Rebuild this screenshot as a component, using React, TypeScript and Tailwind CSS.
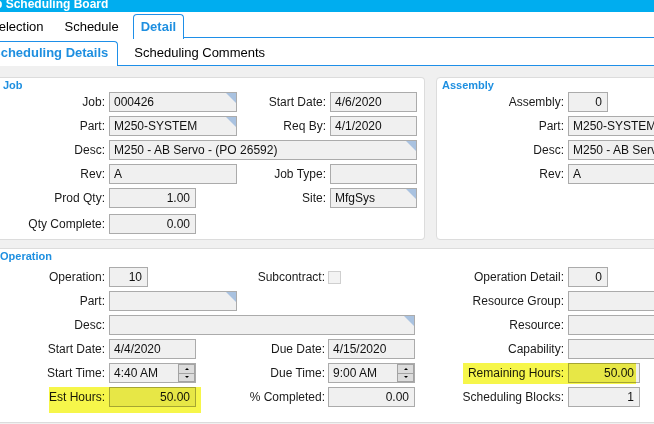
import React from "react";

// Job Scheduling Board - Detail / Scheduling Details tab

type FieldProps = {
  label?: string;
  lw: string;
  iw: string;
  value?: string;
  right?: boolean;
  tri?: boolean;
  spin?: boolean;
  pad?: string;
};

function Spinner() {
  return (
    <div className="absolute right-0 top-0 bottom-0 flex w-[17px] flex-col gap-[1px] bg-[#a3a3a3] p-[1px]">
      <div className="flex flex-1 items-center justify-center bg-[#dcdcdc]">
        <span className="h-0 w-0 border-x-[2px] border-b-[2px] border-x-transparent border-b-black" />
      </div>
      <div className="flex flex-1 items-center justify-center bg-[#dcdcdc]">
        <span className="h-0 w-0 border-x-[2px] border-t-[2px] border-x-transparent border-t-black" />
      </div>
    </div>
  );
}

function Field({ label, lw, iw, value, right, tri, spin, pad = "pr-[4px]" }: FieldProps) {
  return (
    <>
      <span className={`${lw} ${pad} shrink-0 whitespace-nowrap text-right`}>{label}</span>
      <div
        className={`${iw} relative flex h-[20px] shrink-0 items-center overflow-hidden whitespace-nowrap border border-[#ababab] bg-[#f0f0f0] text-[12px] text-[#111] ${
          right ? "justify-end pr-[5px]" : "pl-[4px]"
        }`}
      >
        {value}
        {tri && (
          <span className="absolute right-0 top-0 h-0 w-0 border-l-[10px] border-t-[10px] border-l-transparent border-t-[#a9c2e0]" />
        )}
        {spin && <Spinner />}
      </div>
    </>
  );
}

function Row({ children, className = "" }: { children: React.ReactNode; className?: string }) {
  return <div className={`flex h-[20px] items-center ${className}`}>{children}</div>;
}

function TopTab({ children, active }: { children: React.ReactNode; active?: boolean }) {
  return (
    <div
      className={
        active
          ? "flex h-[25px] items-center rounded-t-[4px] border border-b-0 border-[#1e8fe8] bg-white px-[7px] font-bold text-[#1e8fe0]"
          : "flex h-[25px] items-center px-[7px] text-black"
      }
    >
      {children}
    </div>
  );
}

export default function App() {
  return (
    <div className="h-[424px] w-[654px] overflow-hidden bg-[#f0f0f0] font-['Liberation_Sans',Arial,sans-serif] text-[12px] text-[#1a1a1a]">
      {/* title bar */}
      <div className="h-[12px] overflow-hidden bg-[#00adef]">
        <div className="-ml-[19px] -translate-y-[2px] whitespace-nowrap text-[12px] font-bold leading-[12px] text-white">
          Job Scheduling Board
        </div>
      </div>

      {/* main tabs */}
      <div className="flex h-[27px] items-end bg-white text-[13px]">
        <div className="-ml-[17px] flex items-end gap-[7px]">
          <TopTab>Selection</TopTab>
          <TopTab>Schedule</TopTab>
          <TopTab active>Detail</TopTab>
        </div>
        <div className="h-[2px] flex-1 border-t border-[#1e8fe8]" />
      </div>

      {/* sub tabs */}
      <div className="flex h-[27px] items-end bg-white text-[13px]">
        <div className="-ml-[18px] flex h-[25px] items-center rounded-t-[4px] border border-b-0 border-[#1e8fe8] bg-white px-[9px] pb-[2px] font-bold text-[#1e8fe0]">
          Scheduling Details
        </div>
        <div className="flex h-[25px] flex-1 items-center border-b border-[#1e8fe8] pl-[16px] text-black">
          Scheduling Comments
        </div>
      </div>

      <div className="flex w-[700px] flex-col gap-[8px] pt-[11px]">
        <div className="flex h-[163px] gap-[11px]">
          {/* Job */}
          <div className="flex w-[425px] shrink-0 flex-col gap-[4px] rounded-r-[4px] border border-l-0 border-[#dcdcdc] bg-white">
            <div className="h-[10px] pl-[3px] text-[11px] font-bold leading-[14px] text-[#1e8fe0]">Job</div>
            <Row>
              <Field label="Job:" lw="w-[109px]" iw="w-[128px]" value="000426" tri />
              <Field label="Start Date:" lw="w-[93px]" iw="w-[87px]" value="4/6/2020" />
            </Row>
            <Row>
              <Field label="Part:" lw="w-[109px]" iw="w-[128px]" value="M250-SYSTEM" tri />
              <Field label="Req By:" lw="w-[93px]" iw="w-[87px]" value="4/1/2020" />
            </Row>
            <Row>
              <Field label="Desc:" lw="w-[109px]" iw="w-[308px]" value="M250 - AB Servo - (PO 26592)" tri />
            </Row>
            <Row>
              <Field label="Rev:" lw="w-[109px]" iw="w-[128px]" value="A" />
              <Field label="Job Type:" lw="w-[93px]" iw="w-[87px]" />
            </Row>
            <Row>
              <Field label="Prod Qty:" lw="w-[109px]" iw="w-[87px]" value="1.00" right />
              <Field label="Site:" lw="w-[134px]" iw="w-[87px]" value="MfgSys" tri />
            </Row>
            <Row className="mt-[2px]">
              <Field label="Qty Complete:" lw="w-[109px]" iw="w-[87px]" value="0.00" right />
            </Row>
          </div>

          {/* Assembly */}
          <div className="flex flex-1 flex-col gap-[4px] rounded-l-[4px] border border-[#dcdcdc] bg-white">
            <div className="h-[10px] pl-[5px] text-[11px] font-bold leading-[14px] text-[#1e8fe0]">Assembly</div>
            <Row>
              <Field label="Assembly:" lw="w-[131px]" iw="w-[40px]" value="0" right />
            </Row>
            <Row>
              <Field label="Part:" lw="w-[131px]" iw="w-[120px]" value="M250-SYSTEM" />
            </Row>
            <Row>
              <Field label="Desc:" lw="w-[131px]" iw="w-[200px]" value="M250 - AB Servo - (PO 26592)" />
            </Row>
            <Row>
              <Field label="Rev:" lw="w-[131px]" iw="w-[120px]" value="A" />
            </Row>
          </div>
        </div>

        {/* Operation */}
        <div className="relative flex h-[175px] flex-col gap-[4px] rounded-r-[4px] border border-l-0 border-[#dcdcdc] bg-white">
          <div className="h-[14px] text-[11px] font-bold leading-[14px] text-[#1e8fe0]">Operation</div>
          <Row>
            <Field label="Operation:" lw="w-[109px]" iw="w-[39px]" value="10" right />
            <span className="w-[180px] shrink-0 whitespace-nowrap pr-[3px] text-right">Subcontract:</span>
            <span className="h-[13px] w-[13px] shrink-0 border border-[#cfcfcf] bg-[#f3f3f3]" />
            <Field label="Operation Detail:" lw="w-[227px]" iw="w-[40px]" value="0" right />
          </Row>
          <Row>
            <Field label="Part:" lw="w-[109px]" iw="w-[128px]" tri />
            <Field label="Resource Group:" lw="w-[331px]" iw="w-[100px]" />
          </Row>
          <Row>
            <Field label="Desc:" lw="w-[109px]" iw="w-[306px]" tri />
            <Field label="Resource:" lw="w-[153px]" iw="w-[100px]" />
          </Row>
          <Row>
            <Field label="Start Date:" lw="w-[109px]" iw="w-[87px]" value="4/4/2020" />
            <Field label="Due Date:" lw="w-[132px]" iw="w-[87px]" value="4/15/2020" pad="pr-[3px]" />
            <Field label="Capability:" lw="w-[153px]" iw="w-[100px]" />
          </Row>
          <Row>
            <Field label="Start Time:" lw="w-[109px]" iw="w-[87px]" value="4:40 AM" spin />
            <Field label="Due Time:" lw="w-[132px]" iw="w-[87px]" value="9:00 AM" spin pad="pr-[3px]" />
            <Field label="Remaining Hours:" lw="w-[153px]" iw="w-[72px]" value="50.00" right />
          </Row>
          <Row>
            <Field label="Est Hours:" lw="w-[109px]" iw="w-[87px]" value="50.00" right />
            <Field label="% Completed:" lw="w-[132px]" iw="w-[87px]" value="0.00" right pad="pr-[3px]" />
            <Field label="Scheduling Blocks:" lw="w-[153px]" iw="w-[72px]" value="1" right />
          </Row>

          {/* marker highlights */}
          <div className="pointer-events-none absolute left-[49px] top-[138px] h-[26px] w-[152px] bg-[#f6f64a] mix-blend-multiply" />
          <div className="pointer-events-none absolute left-[463px] top-[114px] h-[21px] w-[173px] bg-[#f6f64a] mix-blend-multiply" />
        </div>
      </div>
    </div>
  );
}
